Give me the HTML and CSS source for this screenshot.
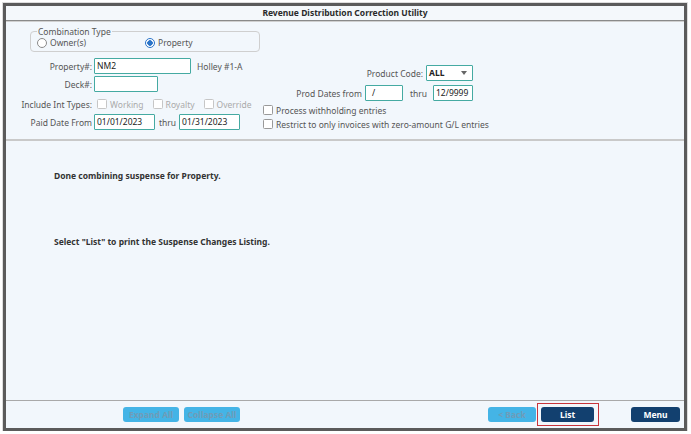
FILE: index.html
```html
<!DOCTYPE html>
<html lang="en">
<head>
  <meta charset="UTF-8">
  <title>Revenue Distribution Correction Utility</title>
  <link rel="stylesheet" href="styles.css">
</head>
<body>
  <div class="frame">
    <!-- Title -->
    <div class="title-bar">Revenue Distribution Correction Utility</div>

    <!-- Selection form -->
    <div class="form-area">
      <div class="left-col">
        <fieldset class="combo">
          <legend>Combination Type</legend>
          <label class="radio-item"><span class="radio"></span>Owner(s)</label>
          <label class="radio-item"><span class="radio checked"></span>Property</label>
        </fieldset>

        <div class="row row-property">
          <span class="lbl">Property#:</span>
          <span class="field w-property">NM2</span>
          <span class="desc">Holley #1-A</span>
        </div>
        <div class="row">
          <span class="lbl">Deck#:</span>
          <span class="field w-deck"></span>
        </div>
        <div class="row row-types">
          <span class="lbl">Include Int Types:</span>
          <span class="check-item disabled first"><span class="box"></span>Working</span>
          <span class="check-item disabled"><span class="box"></span>Royalty</span>
          <span class="check-item disabled"><span class="box"></span>Override</span>
        </div>
        <div class="row">
          <span class="lbl">Paid Date From</span>
          <span class="field w-date">01/01/2023</span>
          <span class="thru">thru</span>
          <span class="field w-date">01/31/2023</span>
        </div>
      </div>

      <div class="right-col">
        <div class="rrow">
          <span class="rlbl">Product Code:</span>
          <span class="field select">ALL<span class="caret"></span></span>
        </div>
        <div class="rrow last">
          <span class="rlbl">Prod Dates from</span>
          <span class="field w-prod">/</span>
          <span class="thru wide">thru</span>
          <span class="field w-prod2">12/9999</span>
        </div>
        <div class="check-item"><span class="box"></span>Process withholding entries</div>
        <div class="check-item"><span class="box"></span>Restrict to only invoices with zero-amount G/L entries</div>
      </div>
    </div>

    <!-- Messages -->
    <div class="content">
      <p class="msg">Done combining suspense for Property.</p>
      <p class="msg msg-second">Select "List" to print the Suspense Changes Listing.</p>
    </div>

    <!-- Footer buttons -->
    <div class="footer">
      <div class="btn-group">
        <button class="btn light w-expand">Expand All</button>
        <button class="btn light w-expand">Collapse All</button>
      </div>
      <div class="btn-group right">
        <button class="btn light w-back">&lt; Back</button>
        <span class="highlight"><button class="btn dark w-list">List</button></span>
        <button class="btn dark w-menu">Menu</button>
      </div>
    </div>
  </div>
</body>
</html>
```

FILE: styles.css
```css
body {
  margin: 0;
  background: #fff;
  font-family: "Noto Sans", "Open Sans", sans-serif;
  font-size: 8.5px;
  color: #555;
}

.frame {
  margin: 3px 0 0 3px;
  width: 678px;
  height: 422px;
  border: 3px solid #5b5b5b;
  background: #f2f7fc;
  display: flex;
  flex-direction: column;
  box-shadow: 0 0 0 1px #ddd;
}

/* Title */
.title-bar {
  height: 14px;
  line-height: 14px;
  text-align: center;
  font-weight: bold;
  color: #2b2b2b;
  border-bottom: 1px solid #8a8a8a;
  box-shadow: 0 1px 0 #d0d0d0;
  background: #f4f8fb;
}

/* Form */
.form-area {
  height: 120px;
  display: flex;
  border-bottom: 2px solid #c9c9c9;
  padding-left: 6px;
  box-sizing: border-box;
}

.left-col {
  width: 251px;
  flex-shrink: 0;
  padding-top: 5px;
}

.combo {
  margin: 0 0 0 18px;
  width: 230px;
  min-width: 0;
  box-sizing: border-box;
  border: 1px solid #cfcfcf;
  border-radius: 4px;
  padding: 0 6px 3px;
  display: flex;
  height: 26px;
}

.combo legend {
  padding: 0 1px;
  line-height: 11px;
  color: #555;
}

.radio-item {
  display: flex;
  align-items: center;
  gap: 3px;
  width: 108px;
}

.radio {
  width: 8px;
  height: 8px;
  border: 1px solid #8a8a8a;
  border-radius: 50%;
  background: #fff;
  box-sizing: content-box;
}

.radio.checked {
  border-color: #2a74c9;
  background: radial-gradient(circle, #2a74c9 0 2.5px, #fff 3px);
}

.row {
  display: flex;
  align-items: center;
  height: 16px;
  margin-top: 2px;
}

.row-property {
  margin-top: 6px;
}

.row-types {
  margin-top: 4px;
  margin-bottom: 2px;
}

.lbl {
  width: 80px;
  text-align: right;
  margin-right: 2px;
  flex-shrink: 0;
}

.field {
  height: 16px;
  box-sizing: border-box;
  border: 1.5px solid #45aaa2;
  background: #fff;
  color: #222;
  padding: 0 2px;
  line-height: 13px;
  border-radius: 1px;
}

.w-property { width: 97px; }
.w-deck { width: 64px; }
.w-date { width: 61px; }
.w-prod { width: 38px; padding-left: 6px; }
.w-prod2 { width: 40px; }

.desc {
  margin-left: 6px;
}

.thru {
  margin: 0 3px 0 4px;
}

.thru.wide {
  margin: 0 6px 0 7px;
}

.check-item {
  display: flex;
  align-items: center;
  gap: 3px;
  margin-right: 9px;
  white-space: nowrap;
}

.check-item.first {
  margin-left: 3px;
}

.check-item.disabled {
  color: #aaa;
}

.box {
  width: 8px;
  height: 8px;
  border: 1px solid #999;
  border-radius: 1.5px;
  background: #fff;
  flex-shrink: 0;
}

.check-item.disabled .box {
  border-color: #c6c6c6;
}

.right-col {
  padding: 44px 0 0 0;
  width: 240px;
}

.rrow {
  display: flex;
  align-items: center;
  justify-content: flex-end;
  height: 16px;
  margin-bottom: 4px;
  width: 210px;
}

.rrow.last {
  margin-bottom: 2px;
}

.rlbl {
  margin-right: 3px;
}

.select {
  width: 47px;
  position: relative;
  font-weight: bold;
}

.caret {
  position: absolute;
  right: 5px;
  top: 5px;
  border-left: 3.5px solid transparent;
  border-right: 3.5px solid transparent;
  border-top: 4px solid #666;
}

.right-col .check-item {
  height: 14px;
}

/* Messages */
.content {
  flex: 1;
  border-bottom: 1px solid #a9a9a9;
  padding-left: 48px;
}

.msg {
  margin: 29px 0 0;
  font-weight: bold;
  color: #333;
  line-height: 12px;
}

.msg-second {
  margin-top: 54px;
}

/* Footer */
.footer {
  height: 27px;
  display: flex;
  align-items: center;
  justify-content: space-between;
  padding: 0 4px 0 117px;
}

.btn-group {
  display: flex;
  align-items: center;
  gap: 5px;
}

.btn {
  height: 15px;
  border: none;
  border-radius: 3px;
  font-family: inherit;
  font-size: 8.5px;
  font-weight: bold;
  padding: 0;
}

.btn.light {
  background: #44b4e6;
  color: #6f9cb8;
}

.btn.dark {
  background: #12406f;
  color: #fff;
}

.w-expand { width: 56px; }
.w-back { width: 48px; }
.w-list { width: 53px; }
.w-menu { width: 49px; margin-left: 31px; }

.btn-group.right {
  gap: 1px;
}

.highlight {
  border: 1px solid #c8343a;
  padding: 3px 4px 3px 3px;
  display: flex;
}
```
